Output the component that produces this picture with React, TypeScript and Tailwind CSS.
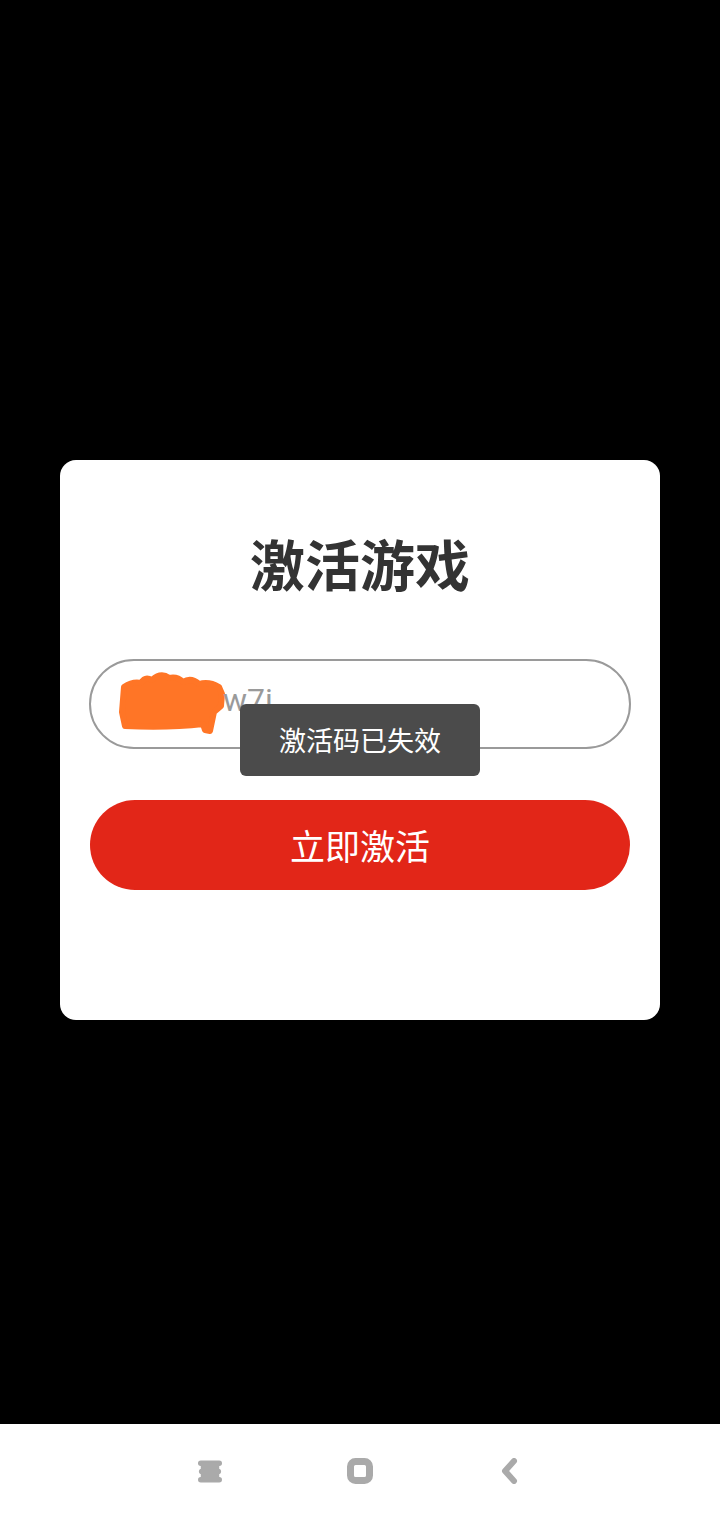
import React from 'react';

const font = { fontFamily: '"Noto Sans CJK SC", "Noto Sans", sans-serif' };

// orange marker scribble hiding the start of the code
const Scribble = () => (
  <svg width="108" height="64" viewBox="0 0 108 64" className="shrink-0">
    <path
      d="M5 15 Q14 9 22 11 Q26 4 33 8 Q42 0 50 6 Q58 4 64 10 Q72 5 80 12 Q90 9 100 15 L103 22 L102 34 L95 40 L91 59 L86 58 L84 52 Q50 56 6 54 L3 40 Z"
      fill="#ff7526"
      stroke="#ff7526"
      strokeWidth="6"
      strokeLinejoin="round"
    />
  </svg>
);

export default function App() {
  return (
    <div className="w-[720px] h-[1520px] flex flex-col bg-black" style={font}>
      <div className="h-[1424px] pt-[460px] px-[60px]">
        <div className="relative bg-white rounded-[16px] pt-[67px] pb-[130px] px-[29px] flex flex-col">
          <h1 className="text-center text-[55px] leading-[70px] font-bold text-[#333333]">激活游戏</h1>
          <div className="mt-[62px] h-[90px] rounded-full border-2 border-[#9a9a9a] flex items-center pl-[28px]">
            <Scribble />
            <span
              className="text-[32px] leading-[32px] text-[#9a9a9a] -ml-[4px] -mt-[9px]"
              style={{ fontFamily: 'Roboto, "Noto Sans", sans-serif' }}
            >
              w7i
            </span>
          </div>
          <button className="mt-[51px] h-[90px] rounded-full bg-[#e22618] text-white text-[35px] mx-[1px]">
            立即激活
          </button>
          <div className="absolute left-[180px] top-[244px] w-[240px] h-[72px] rounded-[6px] bg-[#4b4b4b] flex items-center justify-center text-white text-[27px]">
            激活码已失效
          </div>
        </div>
      </div>
      <div className="flex-1 bg-white flex items-center justify-center pb-[2px]">
        <div className="w-[150px] flex justify-center">
          <svg width="24" height="23" viewBox="0 0 26 24">
            <g fill="#aaaaaa">
              <rect x="0" y="0" width="26" height="6" rx="3" />
              <rect x="1" y="9" width="24" height="6" rx="3" />
              <rect x="0" y="18" width="26" height="6" rx="3" />
              <rect x="3" y="2" width="20" height="20" />
            </g>
          </svg>
        </div>
        <div className="w-[150px] flex justify-center">
          <svg width="26" height="26" viewBox="0 0 26 26">
            <rect x="3.5" y="3.5" width="19" height="19" rx="5" fill="none" stroke="#aaaaaa" strokeWidth="7" />
          </svg>
        </div>
        <div className="w-[150px] flex justify-center">
          <svg width="18" height="26" viewBox="0 0 18 26">
            <path d="M13 3 L4 13 L13 23" fill="none" stroke="#aaaaaa" strokeWidth="6" strokeLinecap="round" strokeLinejoin="round" />
          </svg>
        </div>
      </div>
    </div>
  );
}
